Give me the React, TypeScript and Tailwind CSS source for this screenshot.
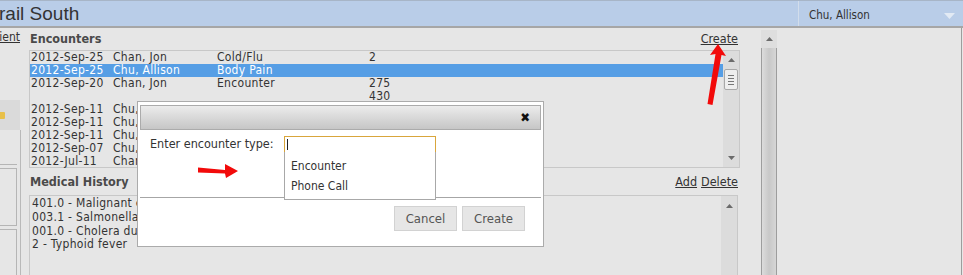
import React from 'react'

const encounters = [
  { date: '2012-Sep-25', name: 'Chan, Jon', type: 'Cold/Flu', num: '2' },
  { date: '2012-Sep-25', name: 'Chu, Allison', type: 'Body Pain', num: '', selected: true },
  { date: '2012-Sep-20', name: 'Chan, Jon', type: 'Encounter', num: '275' },
  { date: '', name: '', type: '', num: '430' },
  { date: '2012-Sep-11', name: 'Chu, Allison', type: '', num: '' },
  { date: '2012-Sep-11', name: 'Chu, Allison', type: '', num: '' },
  { date: '2012-Sep-11', name: 'Chu, Allison', type: '', num: '' },
  { date: '2012-Sep-07', name: 'Chu, Allison', type: '', num: '' },
  { date: '2012-Jul-11', name: 'Chan, Jon', type: '', num: '' },
]

const history = [
  '401.0 - Malignant essential hypertension',
  '003.1 - Salmonella septicemia',
  '001.0 - Cholera due to vibrio cholerae',
  '2 - Typhoid fever',
]

function UpArrow() {
  return (
    <svg width="7" height="4" viewBox="0 0 7 4">
      <path d="M0 4 L3.5 0 L7 4 Z" fill="#6b6b6b" />
    </svg>
  )
}

function DownArrow() {
  return (
    <svg width="7" height="4" viewBox="0 0 7 4">
      <path d="M0 0 L7 0 L3.5 4 Z" fill="#6b6b6b" />
    </svg>
  )
}

export default function App() {
  return (
    <div className="relative h-[275px] w-[963px] overflow-hidden bg-[#e6e6e6] font-['DejaVu_Sans_Condensed','DejaVu_Sans',sans-serif] text-[#333]">
      {/* top bar */}
      <div className="flex h-[28px] border-t border-b-2 border-t-[#a7b5c7] border-b-[#a6a6a6] bg-[#b9cde8]">
        <div className="-ml-px flex-1 font-['Liberation_Sans',Arial,sans-serif] text-[19px] leading-[25px] text-[#333]">
          rail South
        </div>
        <div className="flex w-[165px] items-center justify-between border-l border-[#d2ddeb] pl-[10px] pr-[8px] pt-[4px] text-[11.5px]">
          <span>Chu, Allison</span>
          <svg width="11" height="6" viewBox="0 0 11 6">
            <path d="M0 0 L11 0 L5.5 6 Z" fill="#e2eaf4" />
          </svg>
        </div>
      </div>

      <div className="flex h-[247px]">
        {/* left sidebar */}
        <div className="flex w-[21px] flex-col">
          <div className="flex h-[18px] justify-end overflow-hidden pr-px text-[12px] leading-[18px]">
            <span className="shrink-0 whitespace-nowrap underline">Patient</span>
          </div>
          <div className="h-[54px]" />
          <div className="flex h-[30px] w-[20px] items-center overflow-hidden bg-[#dadada]">
            <div className="-ml-[3px] h-[7px] w-[8px] rounded-[1px] bg-[#e8c04a]" />
          </div>
          <div className="flex flex-1 flex-col border-r border-[#b9b9b9]">
            <div className="h-[34px]" />
            <div className="h-[4px] w-[17px] border-t border-[#b5b5b5]" />
            <div className="h-[57px] w-[17px] border-t border-r border-[#b5b5b5]" />
            <div className="h-[4px] w-[17px] border-t border-[#b5b5b5]" />
            <div className="w-[17px] flex-1 border-t border-r border-[#b5b5b5]" />
          </div>
        </div>

        {/* main content */}
        <div className="flex w-[740px] flex-col pl-[8px]">
          <div className="flex w-[711px] flex-1 flex-col">
            <div className="flex h-[22px] items-center justify-between text-[12.5px]">
              <span className="pl-px font-bold text-[#4a4a4a]">Encounters</span>
              <span className="pr-[2px] underline">Create</span>
            </div>
            <div className="flex h-[118px] border border-[#c8c8c8]">
              <div className="flex-1 text-[12px] leading-[13px] tracking-[0.3px]">
                {encounters.map((r, i) => (
                  <div
                    key={i}
                    className={`flex h-[13px] whitespace-nowrap ${r.selected ? 'bg-[#569ee5] text-white' : ''}`}
                  >
                    <span className="w-[83px] pl-px">{r.date}</span>
                    <span className="w-[104px]">{r.name}</span>
                    <span className="w-[152px]">{r.type}</span>
                    <span>{r.num}</span>
                  </div>
                ))}
              </div>
              <div className="flex w-[16px] flex-col items-center bg-[#dcdcdc]">
                <div className="mt-[6px] flex h-[6px] items-center"><UpArrow /></div>
                <div className="mt-[6px] flex h-[21px] w-[14px] flex-col items-center justify-center gap-[2px] rounded-[2px] border border-[#a8a8a8] bg-[#eeeeee]">
                  <div className="h-px w-[6px] bg-[#777]" />
                  <div className="h-px w-[6px] bg-[#777]" />
                  <div className="h-px w-[6px] bg-[#777]" />
                  <div className="h-px w-[6px] bg-[#777]" />
                </div>
                <div className="flex-1" />
                <div className="mb-[6px] flex h-[6px] items-center"><DownArrow /></div>
              </div>
            </div>
            <div className="flex h-[27px] items-center justify-between pt-[2px] text-[12.5px]">
              <span className="pl-px font-bold text-[#4a4a4a]">Medical History</span>
              <span className="flex gap-[4px] pr-[2px]">
                <span className="underline">Add</span>
                <span className="underline">Delete</span>
              </span>
            </div>
            <div className="mr-[2px] flex flex-1 border border-b-0 border-[#c8c8c8]">
              <div className="flex-1 pl-[2px] pt-px text-[12px] leading-[13.8px] tracking-[0.3px]">
                {history.map((h) => (
                  <div key={h} className="whitespace-nowrap">{h}</div>
                ))}
              </div>
              <div className="flex w-[16px] flex-col items-center bg-[#dcdcdc]">
                <div className="mt-[7px] flex h-[6px] items-center"><UpArrow /></div>
              </div>
            </div>
          </div>
        </div>

        {/* outer scrollbar */}
        <div className="flex w-[16px] flex-col pt-[2px]">
          <div className="flex h-[18px] items-center justify-center bg-[#dedede]"><UpArrow /></div>
          <div className="flex-1 border-x border-[#9d9d9d] bg-gradient-to-r from-[#dcdcdc] via-[#c8c8c8] to-[#d6d6d6]" />
        </div>

        {/* right panel */}
        <div className="w-[185px] border-r border-[#9d9d9d] bg-[#e6e6e6]" />
      </div>

      {/* dialog */}
      <div className="absolute left-[137px] top-[101px] flex h-[146px] w-[407px] flex-col border border-[#ababab] bg-white px-[2px] pt-[3px]">
        <div className="flex h-[25px] items-center justify-end border border-[#ababab] bg-gradient-to-b from-[#ececec] to-[#c6c6c6] pr-[10px]">
          <span className="text-[13px] font-bold leading-none text-[#111]">✖</span>
        </div>
        <div className="relative h-[68px] border-b border-[#a6a6a6]">
          <div className="flex items-center pl-[10px] pt-[5px]">
            <span className="w-[134px] text-[12.5px]">Enter encounter type:</span>
            <div className="flex h-[17px] w-[152px] items-center border border-[#d9a63c] pl-[2px]">
              <div className="h-[11px] w-px bg-[#222]" />
            </div>
          </div>
          <div className="absolute left-[144px] top-[22px] w-[152px] border border-t-0 border-[#a8a8a8] bg-white pb-[3px] pl-[6px] pt-[4px] text-[12px] leading-[20px]">
            <div>Encounter</div>
            <div>Phone Call</div>
          </div>
        </div>
        <div className="flex justify-end gap-[5px] pr-[16px] pt-[8px]">
          <button className="h-[25px] w-[63px] border border-[#d2d2d2] bg-[#e6e6e6] text-[13px] text-[#555]">Cancel</button>
          <button className="h-[25px] w-[63px] border border-[#d2d2d2] bg-[#e6e6e6] text-[13px] text-[#555]">Create</button>
        </div>
      </div>

      {/* red annotation arrows */}
      <svg className="pointer-events-none absolute left-[195px] top-[162px]" width="46" height="18" viewBox="0 0 46 18">
        <path d="M3 5.5 L30 8 L30 2 L43 9 L31 16 L30 11.5 L3 10.5 Z" fill="#f20a0a" />
      </svg>
      <svg className="pointer-events-none absolute left-[704px] top-[42px]" width="26" height="66" viewBox="0 0 26 66">
        <path d="M14 2 L22 14 L17.5 13 L8.5 63 L3.5 62 L11.5 12 L6 13 Z" fill="#f20a0a" />
      </svg>
    </div>
  )
}
